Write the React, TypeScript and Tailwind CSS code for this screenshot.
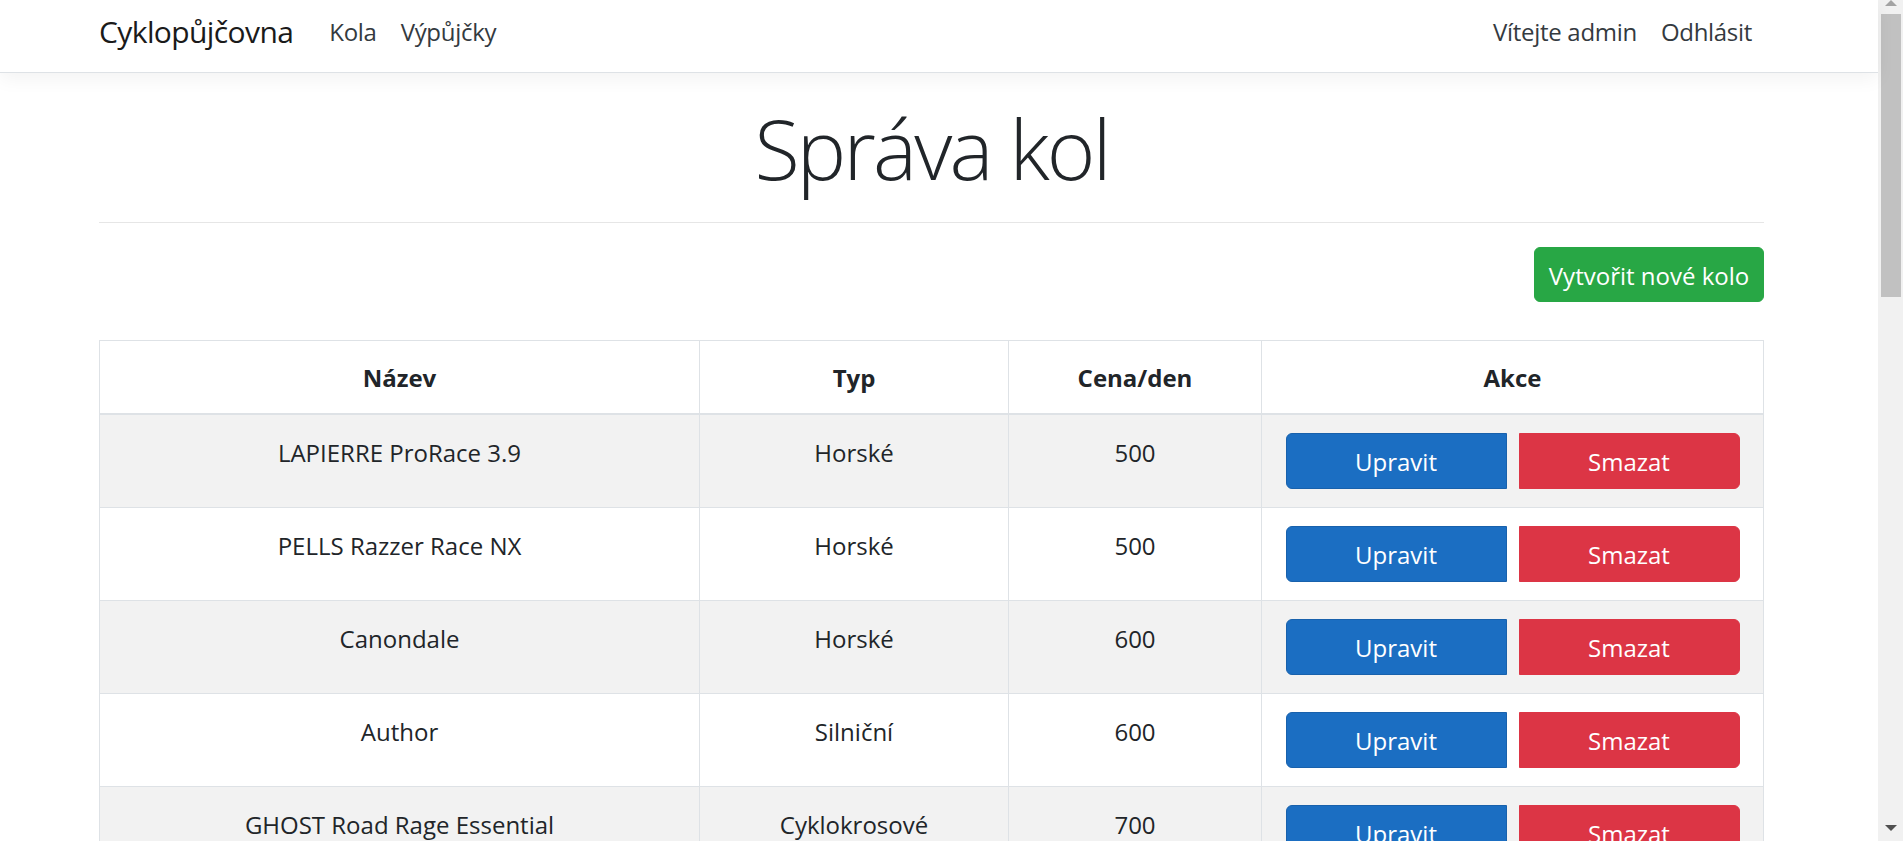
import React from "react";

const rows = [
  { name: "LAPIERRE ProRace 3.9", type: "Horské", price: "500" },
  { name: "PELLS Razzer Race NX", type: "Horské", price: "500" },
  { name: "Canondale", type: "Horské", price: "600" },
  { name: "Author", type: "Silniční", price: "600" },
  { name: "GHOST Road Rage Essential", type: "Cyklokrosové", price: "700" },
];

export default function App() {
  return (
    <div className="h-[841px] w-[1903px] overflow-hidden flex bg-white font-['Open_Sans',sans-serif] text-[#212529]">
      <div className="w-[1878px] flex flex-col">
        <nav className="relative z-10 h-[73px] shrink-0 border-b border-[#dee2e6] bg-white shadow-[0_6px_18px_rgba(0,0,0,0.05)] pl-[99px]">
          <div className="w-[1665px] h-full flex items-center justify-between pb-[9px]">
            <div className="flex items-center">
              <span className="text-[30px] leading-[45px] text-[#1a1a1a] mr-[24px] tracking-[-0.6px]">Cyklopůjčovna</span>
              <span className="text-[24px] leading-[36px] text-[#343a40] px-[12px] tracking-[-0.3px]">Kola</span>
              <span className="text-[24px] leading-[36px] text-[#343a40] px-[12px] tracking-[-0.3px]">Výpůjčky</span>
            </div>
            <div className="flex items-center">
              <span className="text-[24px] leading-[36px] text-[#343a40] px-[12px] tracking-[-0.3px]">Vítejte admin</span>
              <span className="text-[24px] leading-[36px] text-[#343a40] px-[12px] tracking-[-0.3px]">Odhlásit</span>
            </div>
          </div>
        </nav>
        <main className="pl-[99px] pt-[24px]">
          <div className="w-[1665px]">
            <h1 className="text-center font-light text-[83px] leading-[101px] tracking-[-2.8px]">Správa kol</h1>
            <hr className="mt-[24px] border-0 border-t border-[#e6e6e6]" />
            <div className="flex justify-end mt-[24px]">
              <button className="w-[230px] h-[55px] rounded-[6px] bg-[#28a745] border border-[#28a745] text-white text-[24px] leading-[36px] pt-[2px]">
                Vytvořit nové kolo
              </button>
            </div>
            <table className="mt-[38px] w-[1665px] table-fixed border-collapse text-[24px] leading-[36px]">
              <thead>
                <tr>
                  <th className="w-[600px] border border-[#dee2e6] border-b-2 pt-[19px] pb-[17px] px-[18px] font-bold text-center">Název</th>
                  <th className="w-[309px] border border-[#dee2e6] border-b-2 pt-[19px] pb-[17px] px-[18px] font-bold text-center">Typ</th>
                  <th className="w-[253px] border border-[#dee2e6] border-b-2 pt-[19px] pb-[17px] px-[18px] font-bold text-center">Cena/den</th>
                  <th className="border border-[#dee2e6] border-b-2 pt-[19px] pb-[17px] px-[18px] font-bold text-center">Akce</th>
                </tr>
              </thead>
              <tbody>
                {rows.map((r, i) => (
                  <tr key={i} className={i % 2 === 0 ? "bg-[#f2f2f2]" : "bg-white"}>
                    <td className="border border-[#dee2e6] pt-[20px] pb-[16px] px-[18px] text-center align-top">{r.name}</td>
                    <td className="border border-[#dee2e6] pt-[20px] pb-[16px] px-[18px] text-center align-top">{r.type}</td>
                    <td className="border border-[#dee2e6] pt-[20px] pb-[16px] px-[18px] text-center align-top">{r.price}</td>
                    <td className="border border-[#dee2e6] p-[18px] align-top">
                      <div className="flex justify-center gap-[12px]">
                        <button className="w-[221px] h-[56px] rounded-l-[6px] bg-[#1b6ec2] border border-[#1861ac] text-white text-[24px] leading-[36px] pt-[2px]">
                          Upravit
                        </button>
                        <button className="w-[221px] h-[56px] rounded-r-[6px] bg-[#dc3545] border border-[#dc3545] text-white text-[24px] leading-[36px] pt-[2px]">
                          Smazat
                        </button>
                      </div>
                    </td>
                  </tr>
                ))}
              </tbody>
            </table>
          </div>
        </main>
      </div>
      <div className="w-[25px] h-[841px] bg-[#f1f1f1] flex flex-col items-center">
        <svg width="12" height="7" viewBox="0 0 12 7">
          <polygon points="6,0 12,6 0,6" fill="#a3a3a3" />
        </svg>
        <div className="mt-[7px] ml-[1px] w-[20px] h-[283px] bg-[#c1c1c1]" />
        <div className="flex-1" />
        <svg width="12" height="7" viewBox="0 0 12 7" className="mb-[9px]">
          <polygon points="0,0 12,0 6,6" fill="#505050" />
        </svg>
      </div>
    </div>
  );
}
